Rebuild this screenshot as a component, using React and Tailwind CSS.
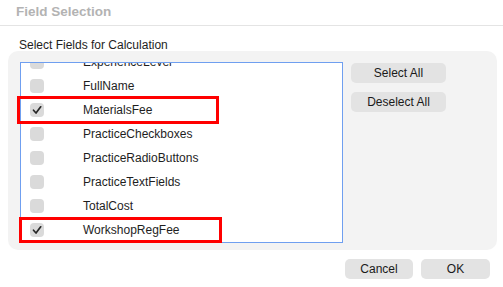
import React from 'react';

const fields = [
  { name: 'ExperienceLevel', checked: false },
  { name: 'FullName', checked: false },
  { name: 'MaterialsFee', checked: true },
  { name: 'PracticeCheckboxes', checked: false },
  { name: 'PracticeRadioButtons', checked: false },
  { name: 'PracticeTextFields', checked: false },
  { name: 'TotalCost', checked: false },
  { name: 'WorkshopRegFee', checked: true },
];

function Check({ checked }) {
  return (
    <span className="w-[14px] h-[14px] rounded-[4px] bg-[#dadada] flex items-center justify-center shrink-0">
      {checked && (
        <svg width="10" height="10" viewBox="0 0 10 10">
          <path d="M1.5 5.2 L4 8 L8.7 1.8" fill="none" stroke="#262626" strokeWidth="1.7" strokeLinecap="round" strokeLinejoin="round" />
        </svg>
      )}
    </span>
  );
}

function Btn({ children, className }) {
  return (
    <button className={`h-[20px] rounded-[5px] bg-[#e3e3e3] text-[12px] text-[#1a1a1a] flex items-center justify-center ${className}`}>
      {children}
    </button>
  );
}

export default function App() {
  return (
    <div className="relative w-[503px] h-[287px] bg-white font-['Liberation_Sans',Arial,sans-serif] overflow-hidden">
      <div className="h-[26px] border-b border-[#e4e4e4] pl-4 flex items-center text-[13.5px] font-bold text-[#b3b3b3]">
        Field Selection
      </div>
      <div className="pl-[19px] pt-[12px] h-[25px] text-[12px] leading-[14px] text-[#1e1e1e]">Select Fields for Calculation</div>
      <div className="ml-2 mr-[6px] h-[199px] rounded-[10px] bg-[#f3f3f3] pt-[11px] pl-3 flex gap-2">
        <div className="w-[323px] h-[181px] border border-[#6f9ff0] bg-white overflow-hidden">
          <div className="-mt-[13px]">
            {fields.map(f => (
              <div key={f.name} className="h-[24px] flex items-center pl-[9px]">
                <Check checked={f.checked} />
                <span className="ml-[39px] text-[12px] text-[#1e1e1e]">{f.name}</span>
              </div>
            ))}
          </div>
        </div>
        <div className="flex flex-col gap-[9px] pt-[1px]">
          <Btn className="w-[95px]">Select All</Btn>
          <Btn className="w-[95px]">Deselect All</Btn>
        </div>
      </div>
      <div className="flex justify-end gap-2 pr-[13px] pt-[9px]">
        <Btn className="w-[68px]">Cancel</Btn>
        <Btn className="w-[69px]">OK</Btn>
      </div>
      <div className="absolute left-[17px] top-[96px] w-[202px] h-[28px] border-[3px] border-[#ff0000]" />
      <div className="absolute left-[19px] top-[217px] w-[203px] h-[26px] border-[3px] border-[#ff0000]" />
    </div>
  );
}
